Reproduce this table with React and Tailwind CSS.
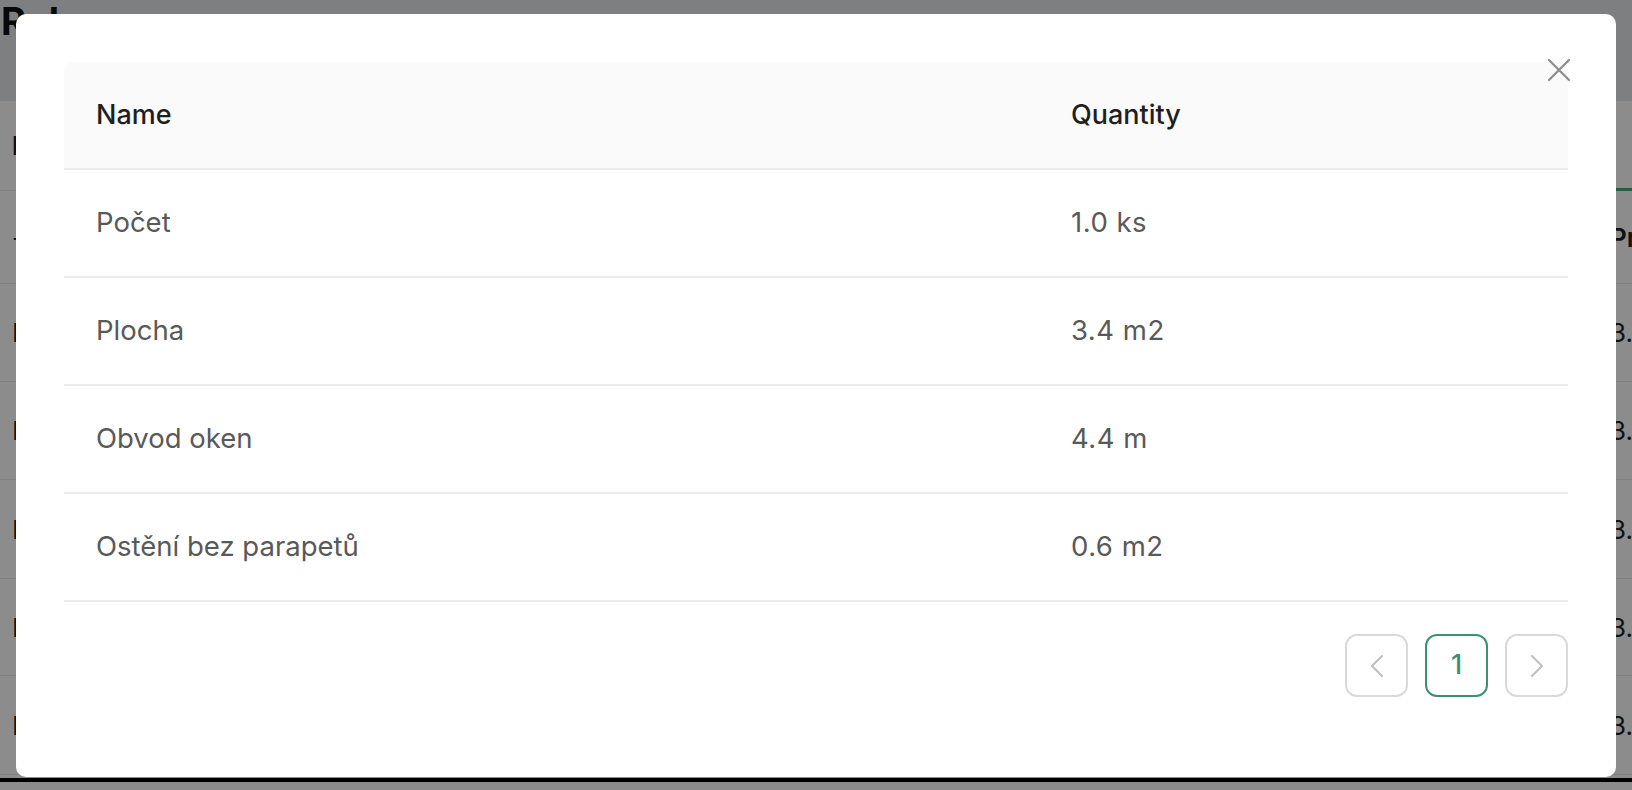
import React from "react"

const rows = [
  { name: "Počet", qty: "1.0 ks" },
  { name: "Plocha", qty: "3.4 m2" },
  { name: "Obvod oken", qty: "4.4 m" },
  { name: "Ostění bez parapetů", qty: "0.6 m2" },
]

const backRows = [
  { h: "h-[90px]", left: "I", right: "", leftBold: true, green: true },
  { h: "h-[93px]", left: "-", right: "Pr", rightBold: true },
  { h: "h-[98px]", left: "I", right: "3." },
  { h: "h-[98px]", left: "I", right: "3." },
  { h: "h-[99px]", left: "I", right: "3." },
  { h: "h-[97px]", left: "I", right: "3." },
  { h: "h-[99px]", left: "I", right: "3." },
]

const Chevron = ({ dir }) => (
  <svg width="14" height="22" viewBox="0 0 14 22" fill="none">
    <path
      d={dir === "left" ? "M12 1 L2 11 L12 21" : "M2 1 L12 11 L2 21"}
      stroke="#bfbfbf"
      strokeWidth="2"
      strokeLinecap="round"
      strokeLinejoin="round"
    />
  </svg>
)

const QuantityModal = () => (
  <div className="absolute left-[16px] top-[14px] w-[1600px] rounded-[10px] bg-white p-[48px] pb-[48px]">
    <button className="absolute right-[45px] top-[44px] flex h-[24px] w-[24px] items-center justify-center">
      <svg width="24" height="24" viewBox="0 0 24 24" fill="none">
        <path d="M2 2 L22 22 M22 2 L2 22" stroke="#8c8c8c" strokeWidth="2.2" strokeLinecap="round" />
      </svg>
    </button>

    <div className="w-full">
      <div className="grid h-[108px] grid-cols-[974px_1fr] rounded-t-[10px] border-b-2 border-[#ebebeb] bg-[#fafafa] text-[27px] font-medium text-[#1f1f1f]">
        <div className="flex items-center pl-[32px]">Name</div>
        <div className="flex items-center pl-[33px]">Quantity</div>
      </div>
      {rows.map((row) => (
        <div
          key={row.name}
          className="grid h-[108px] grid-cols-[974px_1fr] border-b-2 border-[#ebebeb] text-[27.5px] text-[#595959]"
        >
          <div className="flex items-center pl-[32px]">{row.name}</div>
          <div className="flex items-center pl-[33px] tracking-[0.5px]">{row.qty}</div>
        </div>
      ))}
    </div>

    <div className="mt-[32px] mb-[32px] flex justify-end gap-[17px]">
      <button className="flex h-[63px] w-[63px] items-center justify-center rounded-[12px] border-2 border-[#d9d9d9]">
        <Chevron dir="left" />
      </button>
      <button className="flex h-[63px] w-[63px] items-center justify-center rounded-[12px] border-2 border-[#3b9172] text-[27px] font-medium text-[#3b9172]">
        1
      </button>
      <button className="flex h-[63px] w-[63px] items-center justify-center rounded-[12px] border-2 border-[#d9d9d9]">
        <Chevron dir="right" />
      </button>
    </div>
  </div>
)

export default function App() {
  return (
    <div className="relative h-[790px] w-[1632px] overflow-hidden bg-white font-['Inter',sans-serif]">
      <div className="flex h-full flex-col">
        <div className="h-[101px] bg-[#e6e7ea]">
          <h1 className="pl-[1px] text-[38px] font-bold leading-[42px] text-[#111]">Role</h1>
        </div>
        <div className="flex flex-1 justify-between">
          <div className="w-[300px]">
            {backRows.map((r, i) => (
              <div key={i} className={`${r.h} flex items-center border-b border-[#ececec] pl-[12px] text-[26px] text-[#222]`}>
                <span className={r.leftBold ? "font-bold" : ""}>{r.left}</span>
              </div>
            ))}
          </div>
          <div className="w-[30px]">
            {backRows.map((r, i) => (
              <div
                key={i}
                className={`${r.h} flex items-center pl-[8px] text-[26px] text-[#222] ${
                  r.green ? "border-b-[3px] border-[#4aa884]" : "border-b border-[#ececec]"
                }`}
              >
                <span className={r.rightBold ? "font-semibold" : ""}>{r.right}</span>
              </div>
            ))}
          </div>
        </div>
        <div className="h-[4px] shrink-0 bg-black"></div>
        <div className="h-[8px] shrink-0 bg-white"></div>
      </div>

      <div className="absolute inset-0 bg-black/45"></div>

      <QuantityModal />
    </div>
  )
}
